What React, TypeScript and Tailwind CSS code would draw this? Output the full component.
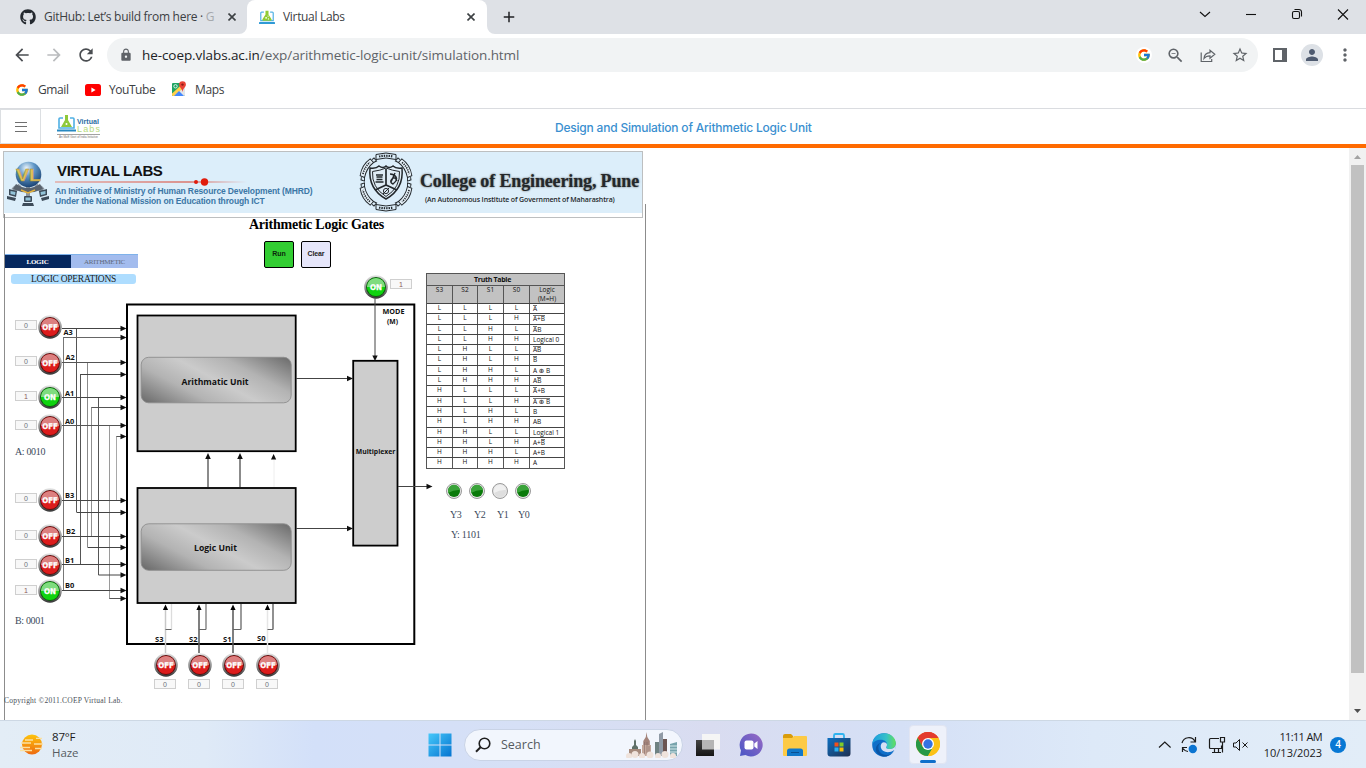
import React from "react";
import { FaGithub } from "react-icons/fa6";
import { FcGoogle } from "react-icons/fc";
import {
  MdAdd, MdArrowBack, MdArrowForward, MdLock, MdMoreVert, MdPerson,
  MdRefresh, MdStarBorder, MdZoomOut,
} from "react-icons/md";

const UI = "font-['Open_Sans','Noto_Sans',sans-serif]";

function LaptopFlask({ className }: { className: string }) {
  return (
    <svg className={className} viewBox="0 0 18 16" fill="none">
      <path d="M5.500 2H3a1 1 0 0 0-1 1v8.500h14V3a1 1 0 0 0-1-1h-2.500" stroke="#55b4e6" strokeWidth="1.400" />
      <rect x="0" y="13" width="18" height="2.400" rx="0.600" fill="#2f9ad6" />
      <path d="M7.300 0.300h3.400v4.200l3.400 5.600c.4.800 0 1.600-.9 1.600H4.800c-.9 0-1.300-.8-.9-1.600l3.400-5.600z" fill="#92cc33" />
      <circle cx="8" cy="8.400" r="1" fill="#fff" />
      <circle cx="10.200" cy="6.400" r="0.700" fill="#fff" />
      <circle cx="10.600" cy="9.600" r="0.700" fill="#fff" />
    </svg>
  );
}

function CloseIcon({ className }: { className: string }) {
  return (
    <svg className={`h-2 w-2 ${className}`} viewBox="0 0 8 8" stroke="#3c4043" strokeWidth="1.600">
      <path d="M.5.500l7 7M7.500.500l-7 7" />
    </svg>
  );
}

function TabStrip() {
  return (
    <div className={`flex h-[34px] shrink-0 bg-[#dee1e6] text-[12px] text-[#3c4043] ${UI}`}>
      <div className="flex w-[247px] items-center pl-5">
        <FaGithub className="h-4 w-4 shrink-0 text-[#24292f]" />
        <div className="ml-2 w-[171px] whitespace-nowrap tracking-[-0.28px]">
          GitHub: Let’s build from here · <span className="text-[#a6a9ad]">G</span>
        </div>
        <CloseIcon className="ml-[13px]" />
      </div>
      <div className="relative flex w-[240px] items-center rounded-t-[8px] bg-white pl-3">
        <svg className="absolute -left-2 bottom-0 h-2 w-2" viewBox="0 0 8 8"><path d="M8 0v8H0a8 8 0 0 0 8-8" fill="#fff" /></svg>
        <svg className="absolute -right-2 bottom-0 h-2 w-2" viewBox="0 0 8 8"><path d="M0 0v8h8a8 8 0 0 1-8-8" fill="#fff" /></svg>
        <LaptopFlask className="h-[15px] w-4" />
        <div className="ml-2 w-[181px] tracking-[-0.32px]">Virtual Labs</div>
        <CloseIcon className="ml-[3px]" />
      </div>
      <div className="flex flex-1 items-center pl-[13px]">
        <MdAdd className="h-[18px] w-[18px] text-[#202124]" />
        <svg className="ml-auto h-[34px] w-[184px]" viewBox="1182 0 184 34" fill="none" stroke="#111" strokeWidth="1.100">
          <path d="M1200 12l5 4.500 5-4.500" />
          <path d="M1246 14.500h10" />
          <rect x="1292.500" y="11.500" width="7" height="7" rx="1.500" />
          <path d="M1294.500 9.500h4.500a2.500 2.500 0 0 1 2.500 2.500v4.500" />
          <path d="M1338 9.500l10 10M1348 9.500l-10 10" />
        </svg>
      </div>
    </div>
  );
}

function Toolbar() {
  return (
    <div className={`flex h-[42px] shrink-0 items-center bg-white text-[#5f6368] ${UI}`}>
      <MdArrowBack className="ml-3 h-5 w-5 text-[#4a4d51]" />
      <MdArrowForward className="ml-3 h-5 w-5 text-[#babcbe]" />
      <MdRefresh className="ml-3 h-5 w-5 text-[#4a4d51]" />
      <div className="ml-[11px] flex h-[34px] w-[1151px] items-center rounded-full bg-[#f1f3f4]">
        <MdLock className="ml-3 h-[14px] w-[14px]" />
        <div className="ml-[9px] w-[994px] shrink-0 text-[13.5px] tracking-[-0.08px] text-[#5f6368]">
          <span className="text-[#202124]">he-coep.vlabs.ac.in</span>/exp/arithmetic-logic-unit/simulation.html
        </div>
        <div className="flex h-4 w-4 items-center justify-center rounded-full bg-white"><FcGoogle className="h-[14px] w-[14px]" /></div>
        <MdZoomOut className="ml-[14px] h-[19px] w-[19px]" />
        <svg className="ml-[15px] h-4 w-4" viewBox="0 0 16 16" fill="none" stroke="currentColor" strokeWidth="1.200">
          <path d="M1.200 5.500v9h10.500v-2.500" />
          <path d="M4 11.500c.3-4 2.500-5.600 6-5.800V3.200l4.800 4.100L10 11.200V8.800c-2.500 0-4.500.7-6 2.700z" />
        </svg>
        <MdStarBorder className="ml-[15px] h-[18px] w-[18px]" />
      </div>
      <svg className="ml-[15px] h-[14px] w-[14px]" viewBox="0 0 14 14"><path d="M1 1h12v12H1z" fill="none" stroke="#5f6368" strokeWidth="2" /><path d="M9 0h5v14H9z" fill="#5f6368" /></svg>
      <div className="ml-[14px] flex h-[22px] w-[22px] items-center justify-center rounded-full bg-[#dde1e6]">
        <MdPerson className="h-[18px] w-[18px] text-[#4f5b70]" />
      </div>
      <MdMoreVert className="ml-[12px] h-5 w-5" />
    </div>
  );
}

function Bookmarks() {
  return (
    <div className={`flex h-[33px] shrink-0 items-start border-b border-[#dadce0] pt-[4px] pl-[15px] text-[12px] leading-5 text-[#3c4043] ${UI}`}>
      <FcGoogle className="mt-[3px] h-[14px] w-[14px]" />
      <span className="ml-[9px] w-[47px] tracking-[-0.4px]">Gmail</span>
      <svg className="mt-1 h-3 w-4" viewBox="0 0 16 12"><rect width="16" height="12" rx="2.600" fill="#f00" /><path d="M6.400 3.500v5L10.600 6z" fill="#fff" /></svg>
      <span className="ml-2 w-[62px] tracking-[-0.45px]">YouTube</span>
      <svg className="mt-[1px] h-4 w-4" viewBox="0 0 16 16">
        <rect x="1" y="2" width="13" height="13" rx="1" fill="#1fa463" />
        <path d="M2 15L14 4v10a1 1 0 0 1-1 1z" fill="#e3e5e8" />
        <path d="M1 12.500L12.500 2H14v3L4 15H2a1 1 0 0 1-1-1z" fill="#ffd04b" />
        <path d="M3 15l5-5 5 5z" fill="#4387fd" />
        <circle cx="4.500" cy="5.300" r="1.700" fill="none" stroke="#fff" strokeWidth=".8" />
        <path d="M11.500.2a3.400 3.400 0 0 0-3.400 3.400c0 2.600 2.700 3.300 3.400 7.400.7-4.100 3.400-4.800 3.400-7.400A3.400 3.400 0 0 0 11.500.2z" fill="#ea4335" />
        <circle cx="11.500" cy="3.600" r="1.200" fill="#8c1d18" />
      </svg>
      <span className="ml-2 tracking-[-0.35px]">Maps</span>
    </div>
  );
}

function SiteHeader() {
  return (
    <div className="flex h-[39px] shrink-0 border-b-4 border-[#ff6a00]">
      <div className="flex w-[41px] items-center justify-center border border-[#dcdfe2]">
        <svg className="h-3 w-3" viewBox="0 0 12 12" stroke="#6f6f6f"><path d="M0 1.500h12M0 5.500h12M0 10.500h12" /></svg>
      </div>
      <svg className="mt-[6px] ml-4 h-[24px] w-[44px] overflow-visible" viewBox="0 0 44 24">
        <g fill="none">
          <path d="M6 3H3a1 1 0 0 0-1 1v9h15V4a1 1 0 0 0-1-1h-3" stroke="#4fb0e4" strokeWidth="1.600" />
          <path d="M0 15.500h19" stroke="#2789c2" strokeWidth="2" />
        </g>
        <path d="M8 0h3v5l4 7H4l4-7z" fill="#8fc93a" />
        <circle cx="9.500" cy="9" r="1" fill="#fff" />
        <text x="20" y="9" fontSize="8" fontWeight="700" fill="#2b6ea3" textLength="22" lengthAdjust="spacingAndGlyphs" fontFamily="Liberation Sans">Virtual</text>
        <text x="20" y="17.300" fontSize="9" fill="#b5da7c" textLength="23" lengthAdjust="spacing" fontFamily="Liberation Sans">Labs</text>
        <path d="M0 19.500h43" stroke="#8a8a8a" strokeWidth=".8" />
        <text x="2" y="23" fontSize="3" fill="#777" textLength="39" fontFamily="Liberation Sans">An MoE Govt of India Initiative</text>
      </svg>
      <div className="mt-[10px] ml-[454px] text-[12px] leading-[18px] font-medium tracking-[-0.21px] whitespace-nowrap text-[#3a8fd0] font-['Inter',sans-serif]">
        Design and Simulation of Arithmetic Logic Unit
      </div>
    </div>
  );
}

function GlobeLogo() {
  return (
    <svg className="h-[46px] w-[42px]" viewBox="0 0 42 46">
      <defs>
        <radialGradient id="globe" cx=".42" cy=".25" r=".8">
          <stop offset="0" stopColor="#e8f3fb" /><stop offset=".4" stopColor="#5e96c6" /><stop offset="1" stopColor="#143b6b" />
        </radialGradient>
      </defs>
      <path d="M13 24L5 33M29 24l8 9M21 25v12M9 26l-3 3M33 26l3 3" stroke="#8b959f" strokeWidth="4" />
      <path d="M9 23q12 8 24 0l3 5q-15 7-30 0z" fill="#59636e" />
      <path d="M14 29l7 3 7-3" stroke="#e3b23c" strokeWidth="1.500" fill="none" />
      <circle cx="21.500" cy="13.500" r="12.800" fill="url(#globe)" />
      <text x="9" y="19.500" fontSize="17" fontWeight="700" fill="#e0c25a" stroke="#a98a2c" strokeWidth=".4" textLength="25" lengthAdjust="spacingAndGlyphs" fontFamily="Liberation Sans">VL</text>
      <g fill="#3d4b59">
        <path d="M2 28l8 2-1 6-7-2zM40 28l-8 2 1 6 7-2z" /><rect x="17" y="35" width="8" height="6" rx="1" />
        <path d="M0 35l9 2-1 3-8-2zM42 35l-8 2 1 3 7-2zM16 42h10l1 3H15z" />
      </g>
      <path d="M3.500 30l5 1-.5 3-4.500-1zM38.500 30l-5 1 .5 3 4.500-1zM18.500 36.500h5v3h-5z" fill="#93c4d9" />
    </svg>
  );
}

function Crest() {
  const ribbons = [57, 123, 237, 303];
  return (
    <svg className="h-[60px] w-[54px] shrink-0 overflow-visible" viewBox="0 0 54 60" fill="none" stroke="#23282c" strokeWidth="1">
      <path d="M17 2.500q10-3 20 0v5q-10-3-20 0zM17 57.500q10 3 20 0v-5q-10 3-20 0z" />
      <path d="M20 4.500q7-1.500 14 0M20 55.500q7 1.500 14 0" strokeWidth="2.200" strokeDasharray="1.400 1" />
      <g transform="translate(27 30)">
        {ribbons.map((r) => (
          <g key={r} transform={`scale(.92 1) rotate(${r})`}>
            <path d="M-9 -22q9 -3.500 18 0l1-5q-10 -4.500 -20 0z" fill="#e6f1f9" />
            <path d="M-9 -22l-3 2-1-4 2.500-1M9 -22l3 2 1-4-2.500-1" />
            <path d="M-7 -25.300q7 -2.500 14 0" strokeWidth="1.800" strokeDasharray="1.300 1" />
          </g>
        ))}
      </g>
      <path d="M11 16q6 1 9-2 4 3 7 0 3 3 7 0 3 3 9 2 2 21-16 31Q9 37 11 16z" fill="#dfecf5" strokeWidth="1.500" />
      <path d="M13.500 19.500q8-1 13.500-3.500Q33 18.500 40.500 19.500q1 16-13.500 25Q12.500 35.500 13.500 19.500z" />
      <path d="M27 17v17M27 33l-11 5M27 33l11 5" strokeWidth="1.700" />
      <path d="M17 23h7M17.500 25h6M17.500 27.500h6M16.500 30h8" strokeWidth="1.600" />
      <path d="M31 22q4 0 6 3t-3 7q-4-2-1-5t5 2M32 30l4-9" strokeWidth="1.400" />
      <circle cx="27" cy="39" r="2.600" /><path d="M24 42l6-6" />
    </svg>
  );
}

function Banner() {
  return (
    <div className="mt-[3px] ml-[3px] h-[67px] w-[640px] border border-[#bdbfc0] bg-white">
      <div className="flex h-[61px] bg-[#dceefa] font-['Liberation_Sans',sans-serif]">
        <div className="shrink-0 pt-[9px] pl-[3px]"><GlobeLogo /></div>
        <div className="w-[310px] shrink-0 pt-[10px] pl-[6px]">
          <div className="pl-[2px] text-[15px] leading-[18px] font-bold tracking-[-0.35px] text-[#111]">VIRTUAL LABS</div>
          <svg className="-mt-[2px] h-2 w-[195px]" viewBox="0 0 195 8">
            <defs><linearGradient id="redline"><stop offset="0" stopColor="#e98b7c" /><stop offset=".7" stopColor="#d93a26" /><stop offset="1" stopColor="#dceefa" /></linearGradient></defs>
            <path d="M0 3.500h192v1H0z" fill="url(#redline)" />
            <circle cx="141" cy="4" r="2" fill="#e01c0c" /><circle cx="149.500" cy="4" r="3.700" fill="#e01c0c" />
          </svg>
          <div className="text-[8.5px] leading-[10px] font-bold whitespace-nowrap text-[#3b77a6]">
            <div className="tracking-[-0.13px]">An Initiative of Ministry of Human Resource Development (MHRD)</div>
            <div className="tracking-[-0.13px]">Under the National Mission on Education through ICT</div>
          </div>
        </div>
        <Crest />
        <div className="pt-[19px] pl-[7px] whitespace-nowrap text-[#24282b]">
          <div className="text-[18px] leading-[20px] font-bold tracking-[-0.14px] [text-shadow:0_0_2px_#555] font-['Liberation_Serif',serif]">College of Engineering, Pune</div>
          <div className="mt-[4px] pl-[5px] text-[7px] leading-[10px] font-semibold tracking-[-0.13px] font-['Open_Sans',sans-serif]">(An Autonomous Institute of Government of Maharashtra)</div>
        </div>
      </div>
    </div>
  );
}

type Switch = { x: number; y: number; on?: boolean; bx: number; by: number };
const switches: Switch[] = [
  { x: 50, y: 327, bx: 15, by: 320 },
  { x: 50, y: 363, bx: 15, by: 356 },
  { x: 50, y: 397, bx: 15, by: 391, on: true },
  { x: 50, y: 426, bx: 15, by: 420 },
  { x: 50, y: 500, bx: 15, by: 493 },
  { x: 50, y: 536, bx: 15, by: 530 },
  { x: 50, y: 565, bx: 15, by: 559 },
  { x: 50, y: 591, bx: 15, by: 585, on: true },
  { x: 166, y: 665, bx: 154, by: 679 },
  { x: 200, y: 665, bx: 188, by: 679 },
  { x: 234, y: 665, bx: 222, by: 679 },
  { x: 268, y: 665, bx: 256, by: 679 },
  { x: 376, y: 287, bx: 390, by: 279, on: true },
];
const TOP = 268;

function Knob({ on }: { on?: boolean }) {
  return (
    <svg className="h-6 w-6" viewBox="0 0 24 24">
      <circle cx="12" cy="12" r="11.800" fill="url(#ring)" />
      <circle cx="12" cy="12" r="10" fill={on ? "#0a5c0a" : "#5e0c0c"} />
      <circle cx="12" cy="12" r="9.100" fill={on ? "#0fd30f" : "#dc1c1c"} />
      <path d="M2.900 12a9.100 9.100 0 0 1 18.200 0z" fill={on ? "#7fdc7f" : "#dc8080"} />
      <text x="12" y="14.800" textAnchor="middle" fontSize="7.800" fontWeight="700" fill="#fff" stroke="#fff" strokeWidth=".3" textLength={on ? 12 : 15.500} lengthAdjust="spacingAndGlyphs" fontFamily="DejaVu Sans">{on ? "ON" : "OFF"}</text>
    </svg>
  );
}

const labels: [string, number, number][] = [
  ["A3", 63.5, 334.8], ["A2", 65.5, 360], ["A1", 65, 395.5], ["A0", 65, 423.8],
  ["B3", 65, 497.6], ["B2", 66, 534.3], ["B1", 65, 563], ["B0", 65, 588],
  ["S3", 155, 642.3], ["S2", 189, 642.3], ["S1", 223, 641.5], ["S0", 257, 640.5],
];
const inputWires: [number, number, string][] = [
  [62, 328.5, "#444"], [63.5, 337.5, "#666"], [62, 362.5, "#555"], [80.5, 374.5, "#444"],
  [62, 397.5, "#444"], [91.5, 407.5, "#555"], [62, 425.5, "#555"], [116.5, 436.5, "#555"],
  [62, 500.5, "#444"], [76.5, 512.5, "#444"], [62, 536.5, "#444"], [87.5, 547.5, "#444"],
  [62, 564.5, "#444"], [98.5, 575.0, "#444"], [62, 590.5, "#444"], [109.5, 598.5, "#555"],
];
const risers: [number, number, number, string][] = [
  [63.5, 337, 590, "#777"], [76.5, 328, 512, "#555"], [80.5, 374, 565, "#555"], [87.5, 362, 547, "#8a8a8a"],
  [91.5, 407, 536, "#8f8f8f"], [98.5, 397, 575, "#555"], [109.5, 425, 599, "#9a9a9a"], [116.5, 436, 500, "#a8a8a8"],
];
const selects: [number, number, string, string][] = [
  [165.5, 171.5, "#c8c8c8", "#dcdcdc"], [199, 206, "#555", "#777"], [233, 241, "#555", "#666"], [267.5, 273, "#e6e6e6", "#555"],
];

function Circuit() {
  return (
    <div className="relative w-[426px]">
      <svg className="absolute inset-0 h-[452px] w-[426px] overflow-visible" viewBox="0 268 426 452" fontFamily="Open Sans, Noto Sans, sans-serif" fontWeight="700" fill="#111">
        <defs>
          <linearGradient id="ring" x1="0" y1="0" x2="0" y2="1"><stop offset="0" stopColor="#e4e4e4" /><stop offset=".55" stopColor="#8d8d8d" /><stop offset="1" stopColor="#333" /></linearGradient>
          <linearGradient id="plate" gradientUnits="userSpaceOnUse" x1="190" y1="430" x2="243" y2="330">
            <stop offset="0" stopColor="#666" /><stop offset=".3" stopColor="#b3b3b3" /><stop offset=".5" stopColor="#cbcbcb" /><stop offset=".7" stopColor="#b3b3b3" /><stop offset="1" stopColor="#666" />
          </linearGradient>
        </defs>
        {risers.map(([x, a, b, c]) => <path key={x} d={`M${x} ${a}V${b}`} stroke={c} />)}
        {inputWires.map(([x, y, c]) => (
          <g key={y}><path d={`M${x} ${y}H122`} stroke={c} /><path d={`M120.500 ${y - 2.7}L126.500 ${y}L120.500 ${y + 2.7}z`} /></g>
        ))}
        <rect x="127" y="304.500" width="287.300" height="339.500" fill="none" stroke="#000" strokeWidth="2" />
        <g fill="#cdcdcd" stroke="#000" strokeWidth="1.800">
          <rect x="137.500" y="315.500" width="158.200" height="135.700" />
          <rect x="137.500" y="488" width="158.200" height="115" />
          <rect x="353.200" y="360.800" width="44.300" height="184.800" />
        </g>
        <rect x="141.200" y="357.300" width="150" height="45.500" rx="7.500" fill="url(#plate)" stroke="#8d8d8d" strokeWidth=".9" />
        <g transform="translate(0 166.500)"><rect x="141.200" y="357.300" width="150" height="46.500" rx="7.500" fill="url(#plate)" stroke="#8d8d8d" strokeWidth=".9" /></g>
        <text x="181.500" y="385.200" fontSize="8.800" textLength="67" lengthAdjust="spacingAndGlyphs">Arithmatic Unit</text>
        <text x="194" y="551.300" fontSize="8.800" textLength="43" lengthAdjust="spacingAndGlyphs">Logic Unit</text>
        <text x="355.800" y="454.400" fontSize="6.800" textLength="39.500" lengthAdjust="spacingAndGlyphs">Multiplexer</text>
        <text x="382.500" y="314.400" fontSize="6.800" textLength="22" lengthAdjust="spacingAndGlyphs">MODE</text>
        <text x="387" y="324" fontSize="6.800" textLength="11" lengthAdjust="spacingAndGlyphs">(M)</text>
        <g stroke="#444">
          <path d="M296 378.500H350M296 528.500H350M398 486.500H428M375 298.500V357" />
        </g>
        <path d="M347 375.800l6 2.700-6 2.700zM347 525.800l6 2.700-6 2.700zM426.500 483.800l6 2.700-6 2.700zM372.300 355.500l2.700 5.500 2.700-5.500z" />
        <path d="M208 458V487M240 458V487" stroke="#666" strokeWidth="1.500" /><path d="M274 460V487" stroke="#eee" />
        <path d="M205.200 459l2.800-6 2.800 6zM237.200 459l2.800-6 2.800 6zM271 459.500l2.600-5.500 2.600 5.500z" />
        {selects.map(([x, bx, c, bc]) => (
          <g key={x} fill="none">
            <path d={`M${x} 609V653`} stroke={c} strokeWidth="1.500" />
            <path d={`M${bx} 604V629.500`} stroke={bc} strokeWidth="1.300" />
            <path d={`M${x} 629.500H${bx}`} stroke="#666" />
            <path d={`M${x - 2.6} 610l2.600-5.500 2.600 5.500z`} fill="#000" />
          </g>
        ))}
        {labels.map(([t, x, y]) => <text key={t} x={x} y={y} fontSize={t[0] === "S" ? 6.3 : 7} textLength={t[0] === "S" ? 8.500 : 9.300} lengthAdjust="spacingAndGlyphs">{t}</text>)}
      </svg>
      {switches.map((s) => (
        <React.Fragment key={`${s.x}-${s.y}`}>
          <button className="absolute h-6 w-6" style={{ left: s.x - 12, top: s.y - 12 - TOP }}><Knob on={s.on} /></button>
          <div
            className={`absolute flex h-[10px] w-[22px] items-center justify-center border border-[#cfcfcf] bg-[#f8f8f8] text-[7px] leading-none font-['Liberation_Sans',sans-serif] ${s.on ? "text-[#8a5a5a]" : "text-[#6b7078]"}`}
            style={{ left: s.bx, top: s.by - TOP }}
          >
            {s.on ? 1 : 0}
          </div>
        </React.Fragment>
      ))}
      <div className="mt-[6px] ml-[11px] h-[10px] w-[125px] rounded-[3px] bg-[#aeddff] text-center text-[9.5px] leading-[10px] tracking-[-0.27px] text-[#222]">LOGIC OPERATIONS</div>
      <div className="mt-[162px] ml-[15px] text-[10px] leading-[12px] tracking-[-0.35px] text-[#3b4a5c]">A: 0010</div>
      <div className="mt-[157px] ml-[15px] text-[10px] leading-[12px] tracking-[-0.35px] text-[#3b4a5c]">B: 0001</div>
      <div className="mt-[69px] ml-[4px] text-[7.500px] leading-[10px] tracking-[0.22px] text-[#4a4f58]">Copyright ©2011.COEP Virtual Lab.</div>
    </div>
  );
}

const O = ({ children }: { children: React.ReactNode }) => (
  <span className="inline-block h-[7px] align-top leading-[7px] shadow-[inset_0_1px_0_#777]">{children}</span>
);
const rows: [string, React.ReactNode][] = [
  ["LLLL", <O>A</O>], ["LLLH", <O>A+B</O>], ["LLHL", <><O>A</O>B</>], ["LLHH", "Logical 0"],
  ["LHLL", <O>AB</O>], ["LHLH", <O>B</O>], ["LHHL", "A ⊕ B"], ["LHHH", <>A<O>B</O></>],
  ["HLLL", <><O>A</O>+B</>], ["HLLH", <O>A ⊕ B</O>], ["HLHL", "B"], ["HLHH", "AB"],
  ["HHLL", "Logical 1"], ["HHLH", <>A+<O>B</O></>], ["HHHL", "A+B"], ["HHHH", "A"],
];

function TruthTable() {
  return (
    <div className="w-[139px] border border-[#555] bg-[#555] text-[6.5px] text-[#111] font-['Open_Sans','DejaVu_Sans',sans-serif]">
      <div className="h-[11px] bg-[#c2c2c2] pr-[6px] text-center text-[7px] leading-[11px] font-bold tracking-[-0.3px]">Truth Table</div>
      <div className="mt-px grid h-[17px] grid-cols-[25px_24px_25px_25px_34px] gap-px text-center leading-[8.500px]">
        {["S3", "S2", "S1", "S0"].map((h) => <div key={h} className="bg-[#c2c2c2] font-medium">{h}</div>)}
        <div className="bg-[#c2c2c2] font-medium whitespace-nowrap">Logic<br />(M=H)</div>
      </div>
      {rows.map(([bits, f]) => (
        <div key={bits} className="grid h-[10.31px] grid-cols-[25px_24px_25px_25px_34px] grid-rows-[9.31px] gap-x-px border-t border-[#444] text-center leading-[8px] font-medium">
          {bits.split("").map((b, i) => <div key={i} className="bg-white">{b}</div>)}
          <div className="bg-white pt-px pl-[3px] text-left leading-[7px] whitespace-nowrap">{f}</div>
        </div>
      ))}
    </div>
  );
}

function Outputs() {
  return (
    <div>
      <div className="mt-[14px] ml-[20px] flex gap-[7px]">
        {[1, 1, 0, 1].map((v, i) => (
          <svg key={i} className="h-4 w-4" viewBox="0 0 16 16">
            <circle cx="8" cy="8" r="7.500" fill="#e6e6e6" stroke="#9a9a9a" />
            <circle cx="8" cy="8" r="6" fill={v ? "#0a7a0a" : "#dedede"} />
            <path d="M2 8.500a6 6 0 0 1 12-1.500Q8 6.500 2 10z" fill={v ? "#3aa33a" : "#f0f0f0"} />
          </svg>
        ))}
      </div>
      <div className="mt-[10px] ml-[24px] flex text-[10px] leading-[12px] tracking-[-0.5px] text-[#3b4a5c]">
        <span className="w-[24px]">Y3</span><span className="w-[23px]">Y2</span><span className="w-[21px]">Y1</span><span>Y0</span>
      </div>
      <div className="mt-[8px] ml-[25px] text-[10px] leading-[12px] tracking-[-0.25px] text-[#3b4a5c]">Y: 1101</div>
    </div>
  );
}

function Simulation() {
  return (
    <div className="relative flex-1 overflow-hidden font-['Liberation_Serif',serif]">
      <div className="absolute top-[66px] bottom-0 left-[4px] w-px bg-[#8c8c8c]" />
      <div className="absolute top-[56px] bottom-0 left-[645px] w-px bg-[#8c8c8c]" />
      <Banner />
      <div className="mt-[-2px] h-[25px] w-[633px] text-center text-[14px] leading-[17px] font-bold tracking-[-0.22px] text-black">Arithmetic Logic Gates</div>
      <div className="flex h-[27px] w-[640px] pl-[4px]">
        <div className="mt-[13px] flex h-[14px] w-[134px] border-t border-[#7fb2ea] text-center text-[7px] leading-[14px]">
          <div className="w-[67px] bg-[#06285f] font-bold tracking-[-0.3px] text-white">LOGIC</div>
          <div className="w-[67px] bg-[#a3bcee] tracking-[-0.2px] text-[#5e6878]">ARITHMETIC</div>
        </div>
        <button className="ml-[126px] h-[27px] w-[30px] rounded-[2px] border border-black bg-[#32cd32] text-[7px] font-bold text-[#0b2a0b] font-['Liberation_Sans',sans-serif]">Run</button>
        <button className="ml-[7px] h-[27px] w-[30px] rounded-[2px] border border-black bg-[#e6e6fa] text-[7px] font-bold tracking-[-0.15px] text-[#222] font-['Liberation_Sans',sans-serif]">Clear</button>
      </div>
      <div className="flex">
        <Circuit />
        <div className="pt-[5px]"><TruthTable /><Outputs /></div>
      </div>
    </div>
  );
}

function Scrollbar() {
  return (
    <div className="flex w-[17px] flex-col items-center bg-[#f1f1f1]">
      <svg className="h-[17px] w-[17px]" viewBox="0 0 17 17"><path d="M5 11h7L8.500 7z" fill="#a3a3a3" /></svg>
      <div className="h-[508px] w-[13px] bg-[#c1c1c1]" />
      <svg className="mt-auto h-[17px] w-[17px]" viewBox="0 0 17 17"><path d="M5 6h7l-3.500 4z" fill="#505050" /></svg>
    </div>
  );
}

function Skyline() {
  return (
    <svg className="h-[26px] w-[52px]" viewBox="0 0 52 26">
      <path d="M9 7l1 2v4l2 2v9H6v-9l2-2V9z" fill="#5f7069" /><path d="M3 17h12v7H3z" fill="#a58a7c" />
      <path d="M20.500 0l.8 5 2.500 4v15h-6.500V9l2.500-4z" fill="#a3837a" /><path d="M16 13h9v11h-9z" fill="#c4a89b" />
      <path d="M18.500 10v13M21 10v13M23 14v9" stroke="#836a68" strokeWidth=".6" />
      <path d="M29 10h5v14h-5z" fill="#6f8282" /><path d="M33 2l4-2v24h-4z" fill="#8f9aa6" /><path d="M37 7h4v17h-4z" fill="#6b5552" />
      <path d="M44 12l7-2v14h-7z" fill="#77a3ac" /><path d="M44 14h7M44 17h7M44 20h7" stroke="#d4e8ea" />
      <g fill="#efe3dc"><circle cx="3" cy="24" r="3" /><circle cx="9" cy="22.500" r="3.500" /><circle cx="16" cy="24" r="3" /><circle cx="24" cy="23" r="3.500" /><circle cx="32" cy="24" r="3" /><circle cx="39" cy="22.500" r="3.500" /><circle cx="47" cy="24" r="3" /></g>
    </svg>
  );
}

function Taskbar() {
  return (
    <div className={`relative flex h-[48px] shrink-0 items-center border-t border-[#cdd8e4] bg-[linear-gradient(90deg,#e3edf6_0%,#dfeaf7_15%,#d3e0f9_23%,#d6e0f6_38%,#d9dcf0_52%,#d5e0f6_66%,#dde9f8_80%,#e2edf8_100%)] text-[12px] text-[#1b1b1b] ${UI}`}>
      <svg className="ml-5 h-[22px] w-6" viewBox="0 0 24 22">
        <defs><linearGradient id="sun" x2="0" y2="1"><stop offset="0" stopColor="#fdc40c" /><stop offset="1" stopColor="#ee6a10" /></linearGradient></defs>
        <circle cx="12" cy="10.500" r="10" fill="url(#sun)" />
        <path d="M5 6h8M16 4.300h6M1 9h10M14 10h9M0 13.500h10M0 16.500h12M15 14.500h7" stroke="#fbe0a0" strokeWidth="1.300" />
      </svg>
      <div className="ml-2 w-[368px] text-[11.5px] leading-[16px]"><div className="tracking-[-0.2px]">87°F</div><div className="tracking-[-0.1px] text-[#575c62]">Haze</div></div>
      <svg className="ml-[8px] h-6 w-6" viewBox="0 0 24 24">
        <defs><linearGradient id="win" x2="1" y2="1"><stop offset="0" stopColor="#46c8fa" /><stop offset="1" stopColor="#0474d0" /></linearGradient></defs>
        <path d="M.5.500h11v11H.5zM12.500.500h11v11h-11zM.5 12.500h11v11H.5zM12.500 12.500h11v11h-11z" fill="url(#win)" />
      </svg>
      <div className="ml-[12px] flex h-[32px] w-[219px] items-center rounded-full border border-[#c9d3e6] bg-[#f2f6fd]">
        <svg className="ml-[10px] h-4 w-4" viewBox="0 0 16 16" fill="none" stroke="#1f1f1f" strokeWidth="1.600"><circle cx="9.500" cy="6.500" r="5.300" /><path d="M5.500 10.300L1 14.800" strokeWidth="2" /></svg>
        <span className="mt-px ml-[10px] text-[12.500px] text-[#555a60]">Search</span>
        <span className="mt-px mr-1 ml-auto"><Skyline /></span>
      </div>
      <svg className="ml-[12px] h-6 w-[26px]" viewBox="0 0 26 24">
        <defs><linearGradient id="tv" y2="1" x2="0"><stop offset="0" stopColor="#444" /><stop offset="1" stopColor="#151515" /></linearGradient></defs>
        <rect x="7" y="1" width="18" height="15.500" fill="#f5f5f5" /><rect x="1" y="7" width="18" height="16" fill="url(#tv)" /><path d="M7 7h12v9.500H7z" fill="#b5b5b5" />
      </svg>
      <svg className="ml-[18px] h-6 w-6" viewBox="0 0 24 24">
        <defs><linearGradient id="chat" x1="1" x2="0" y2="1"><stop offset="0" stopColor="#9a6ac4" /><stop offset="1" stopColor="#4756c6" /></linearGradient></defs>
        <path d="M12 .5A11.500 11.500 0 1 1 6.500 22L1 23l1-5.500A11.500 11.500 0 0 1 12 .5z" fill="url(#chat)" />
        <rect x="5.500" y="7.500" width="9" height="9" rx="2" fill="#fff" /><path d="M15.300 10.500l3.200-2.500v8l-3.200-2.500z" fill="#fff" />
      </svg>
      <svg className="ml-5 h-[22px] w-6" viewBox="0 0 24 22">
        <path d="M0 2a2 2 0 0 1 2-2h6l2 2v4H0z" fill="#d99c0b" /><path d="M0 4h9l2-2h12a1 1 0 0 1 1 1v18a1 1 0 0 1-1 1H1a1 1 0 0 1-1-1z" fill="#fdca45" />
        <path d="M4 22v-5a2.500 2.500 0 0 1 2.500-2.500h11A2.500 2.500 0 0 1 20 17v5z" fill="#1178ca" /><path d="M8 18.500h8" stroke="#0a4f91" />
      </svg>
      <svg className="ml-5 h-6 w-6" viewBox="0 0 24 24">
        <defs><linearGradient id="store" x2="1" y2="1"><stop offset="0" stopColor="#0d6fc2" /><stop offset="1" stopColor="#20304f" /></linearGradient></defs>
        <path d="M7 6V2.500A1.500 1.500 0 0 1 8.500 1h7A1.500 1.500 0 0 1 17 2.500V6" fill="none" stroke="#2fb3ef" strokeWidth="1.800" />
        <path d="M.5 5h23v15.500a3 3 0 0 1-3 3h-17a3 3 0 0 1-3-3z" fill="url(#store)" />
        <path d="M7.500 9.500h4v4h-4z" fill="#f1511b" /><path d="M12.500 9.500h4v4h-4z" fill="#80cc28" /><path d="M7.500 14.500h4v4h-4z" fill="#27aef0" /><path d="M12.500 14.500h4v4h-4z" fill="#fbbc09" />
      </svg>
      <svg className="ml-[21px] h-6 w-6" viewBox="0 0 24 24">
        <defs><linearGradient id="edge" x2="1"><stop offset="0" stopColor="#1c9be0" /><stop offset=".6" stopColor="#35c1c8" /><stop offset="1" stopColor="#62e05a" /></linearGradient></defs>
        <circle cx="12" cy="12" r="11.800" fill="#0f6fc9" />
        <path d="M.3 11C1 4 6 .2 12 .2c7 0 12 5 11.800 10.300C23.700 14 21 16 17.500 16c-2.300 0-3.500-.8-3.500-1.600 0-.7 1-1.200 1-3 0-2.500-2.500-4.700-6-4.700C4.500 6.700 1.300 8.800.3 11z" fill="url(#edge)" />
        <path d="M9 9.500c-3 2-3.500 6-1.300 9.300 2.300 3.400 7.300 4.200 11.300 2.200-2.300 2.600-8 3.800-12 .8C2 18.500 3 11.500 9 9.500z" fill="#0b55a5" />
        <path d="M9.500 10.500c-1.500 2-1 5.500 1.500 7.300 2.800 2 7.500 2 11.300-.8-.8 2-2 3.300-3.300 4 5-2 5-6 4.800-10C23.500 14 21 16 17.500 16c-2.300 0-3.500-.8-3.500-1.600 0-.7 1-1.200 1-3-.6-2-3.800-3-5.500-.9z" fill="#d6e0f4" />
      </svg>
      <div className="relative ml-[13px] flex h-[39px] w-[38px] items-center justify-center rounded-[4px] border border-[#e1e5f2] bg-[#eef1fa]">
        <svg className="mb-px h-6 w-6" viewBox="0 0 24 24">
          <circle cx="12" cy="12" r="12" fill="#fbc117" />
          <path d="M12 12L1.600 6A12 12 0 0 1 22.400 6z" fill="#e33b2e" /><path d="M12 6h10.400A12 12 0 0 0 1.600 6l5.200 9z" fill="#e33b2e" />
          <path d="M1.600 6A12 12 0 0 0 12 24l5.200-9H6.800z" fill="#279847" />
          <path d="M17.200 15L12 24A12 12 0 0 0 22.400 6H12z" fill="#fbc117" />
          <circle cx="12" cy="12" r="6" fill="#fff" /><circle cx="12" cy="12" r="4.700" fill="#3472e3" />
        </svg>
        <div className="absolute bottom-0 left-[10px] h-[3px] w-4 rounded-full bg-[#0f6fcb]" />
      </div>
      <svg className="ml-auto h-5 w-[92px]" viewBox="1158 734 92 20" fill="none" stroke="#1b1b1b" strokeWidth="1.200">
        <path d="M1159 746.500l5.800-5.500 5.800 5.500" />
        <path d="M1182 742a7 7 0 0 1 13-1.500M1195.500 736v5h-5M1188 750.500a7 7 0 0 1-5-3M1182.500 751v-4.500h4.500" />
        <circle cx="1192.800" cy="748" r="4.200" fill="#0b74d1" stroke="none" />
        <path d="M1219 737.500h-8.500a1 1 0 0 0-1 1v8a1 1 0 0 0 1 1h11v-3M1212 751.500h9M1214.500 747.500v4M1218.500 747.500v4M1220.500 736.500h4v4.500h-4zM1222.500 741v10.500" />
        <path d="M1233.500 742v4h2.500l3.500 3.500v-11L1236 742zM1242.500 741.500l5 5M1247.500 741.500l-5 5" strokeWidth="1" />
      </svg>
      <div className="w-[72px] text-right text-[11px] leading-[15.500px] whitespace-nowrap"><div className="tracking-[-0.65px]">11:11 AM</div><div className="tracking-[-0.02px]">10/13/2023</div></div>
      <div className="mr-5 ml-2 flex h-4 w-4 items-center justify-center rounded-full bg-[#0878d4] text-[10px] font-semibold text-white">4</div>
    </div>
  );
}

export default function App() {
  return (
    <div className="flex h-[768px] w-[1366px] flex-col overflow-hidden bg-white">
      <TabStrip />
      <Toolbar />
      <Bookmarks />
      <SiteHeader />
      <div className="flex min-h-0 flex-1">
        <Simulation />
        <Scrollbar />
      </div>
      <Taskbar />
    </div>
  );
}
